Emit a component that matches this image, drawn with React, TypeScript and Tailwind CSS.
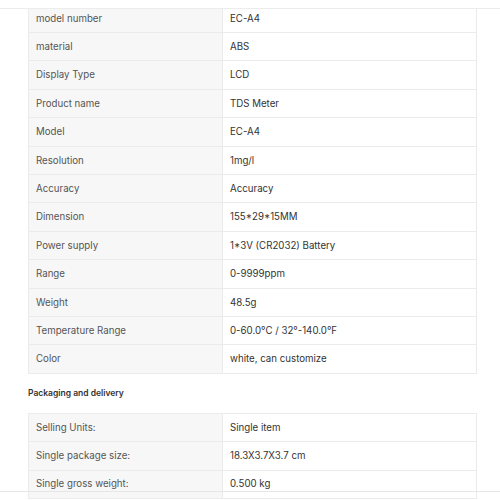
const specs: [string, string][] = [
  ["model number", "EC-A4"],
  ["material", "ABS"],
  ["Display Type", "LCD"],
  ["Product name", "TDS Meter"],
  ["Model", "EC-A4"],
  ["Resolution", "1mg/l"],
  ["Accuracy", "Accuracy"],
  ["Dimension", "155*29*15MM"],
  ["Power supply", "1*3V (CR2032) Battery"],
  ["Range", "0-9999ppm"],
  ["Weight", "48.5g"],
  ["Temperature Range", "0-60.0°C / 32°-140.0°F"],
  ["Color", "white, can customize"],
];

const packaging: [string, string][] = [
  ["Selling Units:", "Single item"],
  ["Single package size:", "18.3X3.7X3.7 cm"],
  ["Single gross weight:", "0.500 kg"],
];

function SpecTable({ rows }: { rows: [string, string][] }) {
  return (
    <div className="w-[449px] border-l border-t border-r border-[#ebebeb]">
      {rows.map(([k, v]) => (
        <div key={k} className="flex h-[28.4px] border-b border-[#ebebeb]">
          <div className="flex w-[193px] items-center bg-[#f7f7f7] pl-[7px] pt-px text-[#555555]">{k}</div>
          <div className="flex flex-1 items-center border-l border-[#ebebeb] pl-[7px] pt-px text-[#333333]">{v}</div>
        </div>
      ))}
    </div>
  );
}

export default function App() {
  return (
    <div
      className="relative h-[500px] w-[500px] overflow-hidden bg-white text-[9.7px]"
      style={{ fontFamily: "Inter, 'Noto Sans', sans-serif" }}
    >
      <div className="absolute left-0 right-0 top-0 z-10 h-[9px] border-b border-[#ececec] bg-white" />
      <div className="pl-[28px] pt-[3.7px]">
        <SpecTable rows={specs} />
        <div className="flex h-[39px] items-center text-[8.5px] font-semibold text-[#333333]">
          Packaging and delivery
        </div>
        <SpecTable rows={packaging} />
      </div>
      <div className="absolute left-0 right-0 top-[491px] z-10 border-t border-[#e6e6e6]" />
    </div>
  );
}
